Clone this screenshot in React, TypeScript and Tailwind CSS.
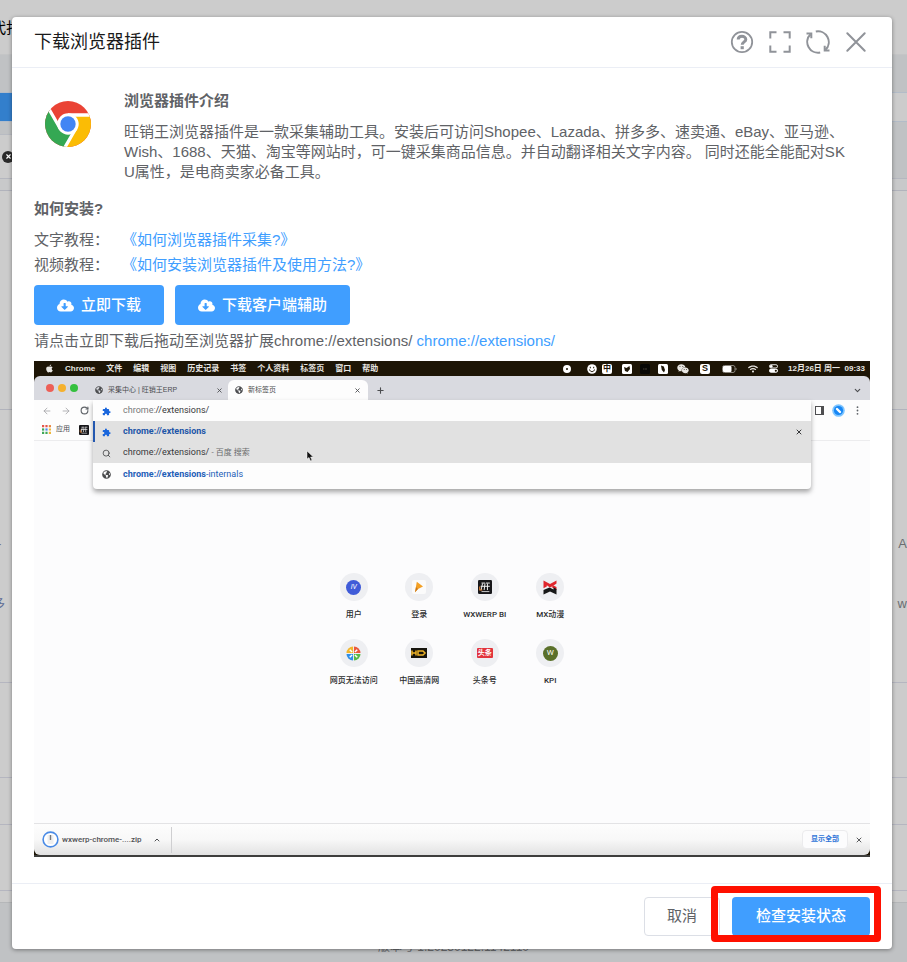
import type { ReactNode } from 'react';
import { FaApple, FaCloudDownloadAlt, FaGlobeAmericas, FaWeixin, FaWifi } from 'react-icons/fa';
import { MdExtension } from 'react-icons/md';
import { ArrowLeft, ArrowRight, ChevronDown, ChevronUp, Plus, RotateCw, Search, X } from 'lucide-react';

const MENU_ITEMS = ['文件', '编辑', '视图', '历史记录', '书签', '个人资料', '标签页', '窗口', '帮助'];

/** 背景页面（被遮罩压暗） */
function PageBackdrop() {
  return (
    <div aria-hidden="true" className="absolute inset-0 flex flex-col overflow-hidden bg-[#cccccc] text-[13px] text-[#6b6d70]">
      <div className="h-[55px] shrink-0 overflow-hidden border-b border-[#c4c5c6] pt-[18px] text-[15px] leading-5 text-black">
        <span className="-ml-[9px]">代打</span>
      </div>
      <div className="h-[37px] shrink-0 bg-[#c0c2c4]" />
      <div className="flex h-[30px] shrink-0 justify-between border-y border-[#b3bcc8] bg-[#cccccc]">
        <div className="w-10 bg-[#337fcc]" />
      </div>
      <div className="flex h-14 shrink-0 justify-between bg-[#c0c2c4]">
        <div className="mt-3 flex w-10 items-center border-t border-[#b8bbc2] bg-[#cccccc] pl-0.5">
          <span className="flex size-3 items-center justify-center rounded-full bg-[#2a2a2a] text-white">
            <X size={7} strokeWidth={4} />
          </span>
        </div>
      </div>
      <div className="h-3 shrink-0 border-t border-[#b5b7bf] bg-[#c8c9ca]" />
      <div className="h-[219px] shrink-0 border-t border-[#b1b3bc]" />
      <div className="h-[273px] shrink-0 border-t border-[#b1b3bc] pt-[124px]">
        <div className="flex justify-between leading-5">
          <span className="-ml-[3px]">-</span>
          <span>A</span>
        </div>
        <div className="mt-10 flex justify-between leading-5">
          <span className="-ml-2 text-[#5d6b94]">多</span>
          <span>w</span>
        </div>
      </div>
      <div className="h-[95px] shrink-0 border-t border-[#b5b6c0]" />
      <div className="h-[47px] shrink-0 border-t border-[#b5b6c0]" />
      <div className="h-[66px] shrink-0 border-t border-[#b5b6c0]" />
      <div className="h-3 shrink-0 border-t border-[#b5b6c0]" />
      <div className="grow border-t border-[#b5b7b9] bg-[#c0c2c4] pt-9 text-center text-[12px] leading-4">
        版本号 1.20230122.1142110
      </div>
    </div>
  );
}

function ChromeLogo() {
  return (
    <svg viewBox="-23 -23 46 46" className="size-[46px]" aria-label="Chrome" role="img">
      <clipPath id="chrome-disc">
        <circle r="23" />
      </clipPath>
      <g clipPath="url(#chrome-disc)">
        <rect x="-23" y="-23" width="46" height="46" fill="#ea4335" />
        <path d="M0-9H30V30.5H-7.2L7.8 4.5Z" fill="#fbbc05" />
        <path d="M7.8 4.5L-7.2 30.5H-30V-21.5H-22.8L-7.8 4.5Z" fill="#34a853" />
        <path d="M0-9H30M7.8 4.5L-7.2 30.5M-7.8 4.5L-22.8-21.5" stroke="#fff" strokeWidth="3.3" />
      </g>
      <circle r="10.7" fill="#fff" />
      <circle r="7.7" fill="#4285f4" />
    </svg>
  );
}

function HeaderButton({ label, children }: { label: string; children: ReactNode }) {
  return (
    <button type="button" aria-label={label} className="text-[#909399]">
      <svg viewBox="-12 -12 24 24" className="size-6" fill="none" stroke="currentColor" strokeWidth="2">
        {children}
      </svg>
    </button>
  );
}

function DialogHeader() {
  return (
    <header className="flex h-[51px] items-center justify-between border-b border-[#ebeef5] pr-6 pl-[22px]">
      <h1 className="text-[18px] leading-6 text-[#1a1a1a]">下载浏览器插件</h1>
      <div className="flex gap-[14px]">
        <HeaderButton label="帮助">
          <circle r="10.2" strokeWidth="1.8" />
          <path d="M-3.8-2.4C-3.8-6.8 3.8-6.6 3.8-2.6C3.8 0 .2-.2.2 2.8" strokeWidth="3" />
          <path d="M.2 4.2V7.2" strokeWidth="3.2" />
        </HeaderButton>
        <HeaderButton label="全屏">
          <path d="M-3.5-9.7H-9.7V-3.5M3.5-9.7H9.7V-3.5M-3.5 9.7H-9.7V3.5M3.5 9.7H9.7V3.5" />
        </HeaderButton>
        <HeaderButton label="刷新">
          <path d="M-2.2-10.5A10.8 10.8 0 0 1 7.5 7.8M2.2 10.5A10.8 10.8 0 0 1-7.5-7.8" />
          <path d="M6.7 3.8V8.5H11.5M-6.7-3.8V-8.5H-11.5" />
        </HeaderButton>
        <HeaderButton label="关闭">
          <path d="M-8.7-8.7L8.7 8.7M8.7-8.7L-8.7 8.7" strokeLinecap="round" />
        </HeaderButton>
      </div>
    </header>
  );
}

function Intro() {
  return (
    <section className="flex items-start pt-[23px]">
      <div className="w-[90px] shrink-0 pt-[10px] pl-[11px]">
        <ChromeLogo />
      </div>
      <div className="min-w-0">
        <h2 className="font-bold leading-5">浏览器插件介绍</h2>
        <p className="mt-[11px] leading-5">
          旺销王浏览器插件是一款采集辅助工具。安装后可访问Shopee、Lazada、拼多多、速卖通、eBay、亚马逊、
          <br />
          Wish、1688、天猫、淘宝等网站时，可一键采集商品信息。并自动翻译相关文字内容。 同时还能全能配对SK
          <br />
          U属性，是电商卖家必备工具。
        </p>
      </div>
    </section>
  );
}

function Install() {
  return (
    <section className="mt-[17px]">
      <h2 className="font-bold leading-5">如何安装?</h2>
      <div className="mt-2 leading-[25px]">
        <div className="flex">
          <span className="w-[88px]">文字教程：</span>
          <a href="#text" className="text-[#409eff]">《如何浏览器插件采集?》</a>
        </div>
        <div className="flex">
          <span className="w-[88px]">视频教程：</span>
          <a href="#video" className="text-[#409eff]">《如何安装浏览器插件及使用方法?》</a>
        </div>
      </div>
      <div className="mt-2 flex gap-[11px] font-medium text-white">
        <button type="button" className="flex h-10 items-center gap-[7px] rounded bg-[#409eff] px-[23px]">
          <FaCloudDownloadAlt size={17} />
          立即下载
        </button>
        <button type="button" className="flex h-10 items-center gap-[7px] rounded bg-[#409eff] px-[23px]">
          <FaCloudDownloadAlt size={17} />
          下载客户端辅助
        </button>
      </div>
      <p className="mt-[6px] leading-5">
        请点击立即下载后拖动至浏览器扩展chrome://extensions/{' '}
        <a href="#extensions" className="text-[#409eff]">chrome://extensions/</a>
      </p>
    </section>
  );
}

function MenuBar() {
  return (
    <div className="flex h-[15px] items-center justify-between bg-[#1d1506] pr-[5px] pl-[11px] text-[8px] leading-3 font-bold text-[#e8e6e2]">
      <div className="flex items-center gap-[11px]">
        <FaApple size={9} />
        <span>Chrome</span>
        {MENU_ITEMS.map((item) => (
          <span key={item} className="whitespace-nowrap">{item}</span>
        ))}
      </div>
      <div className="flex items-center">
        <span className="mr-4 size-2 rounded-full border-[3px] border-white" />
        <svg viewBox="0 0 10 10" className="mr-[5px] size-[10px]">
          <circle cx="5" cy="5" r="4.8" fill="#fff" />
          <path d="M3.3 2.8V4.3M6.7 2.8V4.3M2.5 5.5C3 8.3 7 8.3 7.5 5.5" fill="none" stroke="#1d1506" />
        </svg>
        <span className="mr-[10px] flex size-[10px] items-center justify-center rounded-[2px] bg-white text-[8px] leading-none text-[#1d1506]">中</span>
        <svg viewBox="0 0 10 10" className="mr-2 size-[10px]">
          <rect width="10" height="10" rx="1.5" fill="#fff" />
          <path d="M2 3L4.5 4L7.5 2L8 5L5.5 8L3 7Z" fill="#1d1506" />
        </svg>
        <svg viewBox="0 0 10 10" className="mr-2 size-[10px]">
          <rect width="10" height="10" rx="1.5" fill="#080704" />
          <path d="M3 5H4.5M6 4V6" stroke="#443f35" />
        </svg>
        <svg viewBox="0 0 10 10" className="mr-[9px] size-[10px]">
          <rect width="10" height="10" rx="1.5" fill="#fff" />
          <path d="M3 1.5L5.8 2.5L7 6L6 8.6L3.8 6Z" fill="#1d1506" />
        </svg>
        <FaWeixin size={12} className="mr-[11px]" />
        <span className="mr-3 flex size-[10px] items-center justify-center rounded-[2px] bg-white text-[9px] leading-none text-[#1d1506]">S</span>
        <svg viewBox="0 0 15 8" className="mr-[11px] h-2 w-[15px]">
          <rect x=".5" y=".5" width="12.5" height="7" rx="2" fill="none" stroke="#8b877e" />
          <rect x="1" y="1" width="8.5" height="6" rx="1" fill="#fff" />
          <path d="M14 3V5" stroke="#8b877e" />
        </svg>
        <FaWifi size={10} className="mr-[11px]" />
        <svg viewBox="0 0 10 10" className="mr-[10px] size-[9px]">
          <rect x=".5" y=".8" width="9" height="3.6" rx="1.8" fill="none" stroke="#fff" />
          <circle cx="2.5" cy="2.6" r="1.5" fill="#fff" />
          <rect x="0" y="5.4" width="10" height="4.2" rx="2" fill="#fff" />
          <circle cx="7.6" cy="7.5" r="1.2" fill="#1d1506" />
        </svg>
        <span className="whitespace-pre">12月26日 周一  09:33</span>
      </div>
    </div>
  );
}

function TabStrip() {
  return (
    <div className="bg-[#1d1506]">
      <div className="flex h-6 items-end rounded-t-md bg-[#d9dae0] pr-2 pl-3 text-[7px] text-[#4c4d50]">
        <div className="flex h-6 w-[49px] items-center gap-1">
          <span className="size-2 rounded-full bg-[#ed5f57]" />
          <span className="size-2 rounded-full bg-[#f5b12e]" />
          <span className="size-2 rounded-full bg-[#35c03f]" />
        </div>
        <div className="flex h-6 w-[133px] items-center gap-[5px] pt-1 pr-[5px]">
          <FaGlobeAmericas size={8} />
          <span className="grow">采集中心 | 旺销王ERP</span>
          <X size={7} strokeWidth={3} />
        </div>
        <div className="flex h-5 w-[140px] items-center gap-[5px] rounded-t-md bg-[#fdfdfd] px-[7px]">
          <FaGlobeAmericas size={8} />
          <span className="grow">新标签页</span>
          <X size={7} strokeWidth={3} />
        </div>
        <div className="flex h-6 grow items-center justify-between pt-1 pl-2">
          <Plus size={9} strokeWidth={3} />
          <ChevronDown size={9} strokeWidth={3} />
        </div>
      </div>
    </div>
  );
}

function AddressArea() {
  return (
    <div className="relative h-[41px] border-b border-[#ececee] bg-[#fdfdfd] px-2">
      <div className="flex h-[21px] items-center justify-between text-[#5f6368]">
        <div className="flex items-center gap-[9px]">
          <ArrowLeft size={10} className="text-[#a5a5a8]" />
          <ArrowRight size={10} className="text-[#a5a5a8]" />
          <RotateCw size={9} strokeWidth={3} />
        </div>
        <div className="flex items-center gap-2">
          <svg viewBox="0 0 9 9" className="size-[9px]">
            <rect x=".5" y=".5" width="8" height="8" fill="none" stroke="#4e4e50" />
            <rect x="6" y="1" width="2.5" height="7" fill="#4e4e50" />
          </svg>
          <svg viewBox="0 0 13 13" className="size-[13px]">
            <circle cx="6.5" cy="6.5" r="6.3" fill="#7cc4ff" />
            <circle cx="6.5" cy="6.5" r="4.6" fill="#1787f5" />
            <path d="M5 5L8 8" stroke="#fff" strokeWidth="2.4" strokeLinecap="round" />
          </svg>
          <svg viewBox="0 0 9 9" className="size-[9px]" fill="#5f6368">
            <circle cx="4.5" cy="1.2" r=".9" />
            <circle cx="4.5" cy="4.5" r=".9" />
            <circle cx="4.5" cy="7.8" r=".9" />
          </svg>
        </div>
      </div>
      <div className="flex h-[17px] items-center text-[7px] text-[#4c4d50]">
        <svg viewBox="0 0 9 9" className="mr-[5px] size-[9px]">
          <path d="M0 1.2H2.2M3.4 1.2H5.6" stroke="#e5554a" strokeWidth="2.2" />
          <path d="M6.8 1.2H9" stroke="#e8853d" strokeWidth="2.2" />
          <path d="M0 4.5H2.2" stroke="#3fa757" strokeWidth="2.2" />
          <path d="M3.4 4.5H5.6" stroke="#4c86ee" strokeWidth="2.2" />
          <path d="M6.8 4.5H9M6.8 7.8H9" stroke="#efb73b" strokeWidth="2.2" />
          <path d="M0 7.8H2.2M3.4 7.8H5.6" stroke="#3fa757" strokeWidth="2.2" />
        </svg>
        <span className="mr-[9px]">应用</span>
        <ErpGlyph className="size-[10px]" />
      </div>
      <Suggestions />
    </div>
  );
}

function Suggestions() {
  return (
    <div className="absolute top-0 right-[59px] left-[59px] z-10 rounded-b bg-[#fdfdfd] pb-1 font-['Roboto','Noto_Sans_CJK_SC',sans-serif] text-[9px] text-[#37383a] shadow-[0_3px_5px_rgba(0,0,0,0.35)]">
      <div className="flex h-[21px] items-center gap-3 pt-px pl-[9px]">
        <MdExtension size={9} className="text-[#1a66dc]" />
        <span>
          <span className="text-[#77787a]">chrome:</span>//extensions/
        </span>
      </div>
      <div className="bg-[#e1e1e1]">
        <div className="flex h-[21px] items-center gap-3 border-l-2 border-[#2458b0] pt-px pr-2 pl-[7px]">
          <MdExtension size={9} className="text-[#1a66dc]" />
          <span className="grow font-bold text-[#2256a8]">chrome://extensions</span>
          <X size={8} strokeWidth={3} />
        </div>
        <div className="flex h-[21px] items-center gap-3 pt-px pl-[9px]">
          <Search size={9} strokeWidth={2} />
          <span>
            chrome://extensions/ <span className="text-[8px] text-[#6b6c6e]">- 百度 搜索</span>
          </span>
        </div>
      </div>
      <div className="flex h-[22px] items-center gap-3 pt-px pl-[9px] text-[#2460b8]">
        <FaGlobeAmericas size={9} className="text-[#4a4b4d]" />
        <span>
          <b>chrome://extensions</b>-internals
        </span>
      </div>
      {/* 鼠标指针 */}
      <svg viewBox="0 0 8 12" className="absolute top-[50px] left-[213px] h-3 w-2">
        <path d="M1 1V9L3 7.5L4.5 11L6 10.3L4.6 7H7.3Z" fill="#111" stroke="#fff" strokeWidth=".5" />
      </svg>
    </div>
  );
}

function ErpGlyph({ className }: { className: string }) {
  return (
    <svg viewBox="0 0 16 16" className={className}>
      <rect width="16" height="16" rx="1.5" fill="#17171a" />
      <path d="M4 3.5H8M9 3.5H13.5M5.2 4L3.5 11.5M3 7.2H13.5M10.8 4V11.5M8 4L7 11.5" stroke="#f3f3f3" strokeWidth="1.1" fill="none" />
      <path d="M2 7.5V11.5H5" stroke="#ee8a34" strokeWidth="1.2" fill="none" />
      <path d="M4 13.2H13" stroke="#bbb" strokeWidth="1.2" />
    </svg>
  );
}

const SHORTCUTS: { label: string; icon: ReactNode }[] = [
  {
    label: '用户',
    icon: <span className="flex size-[15px] items-center justify-center rounded-full bg-[#3f5bd8] text-[7px] italic text-white">IV</span>,
  },
  {
    label: '登录',
    icon: (
      <svg viewBox="0 0 14 14" className="size-[14px]">
        <rect width="14" height="14" rx="2" fill="#fbfbfb" />
        <path d="M4.8 1.8L11 6.5L6 9L3 12.2Z" fill="#f4a024" />
        <path d="M6 9L3 12.2L4 7Z" fill="#c9781d" />
      </svg>
    ),
  },
  { label: 'WXWERP BI', icon: <ErpGlyph className="size-[14px]" /> },
  {
    label: 'MX动漫',
    icon: (
      <svg viewBox="0 0 14 15" className="h-[15px] w-[14px]">
        <path d="M.5.5L7 4L13.5.5V3.5L8.5 7L13.5 10V7L10.5 5.5L7 7.5L3.8 5.2V6.6L.5 8.2Z" fill="#e0262c" />
        <path d="M.5 14.5V10L6.5 7.6L10.5 9.6V7.2L13.5 9V14.5L7 11.5Z" fill="#171717" />
      </svg>
    ),
  },
  {
    label: '网页无法访问',
    icon: (
      <svg viewBox="0 0 16 16" className="size-[15px]">
        <path d="M7.5.5V7.5H.5A7.2 7.2 0 0 1 7.5.5Z" fill="#f2b52c" />
        <path d="M8.5.5A7.2 7.2 0 0 1 15.5 7.5H8.5Z" fill="#e9573b" />
        <path d="M.5 8.5H7.5V15.5A7.2 7.2 0 0 1 .5 8.5Z" fill="#2f8fe8" />
        <path d="M8.5 8.5H15.5A7.2 7.2 0 0 1 8.5 15.5Z" fill="#58b947" />
        <path d="M4 4L6.5 6.5M12 4L9.5 6.5M4 12L6.5 9.5M12 12L9.5 9.5" stroke="#fff" strokeWidth="1.6" />
      </svg>
    ),
  },
  {
    label: '中国高清网',
    icon: (
      <svg viewBox="0 0 16 10" className="h-[10px] w-4">
        <rect width="16" height="10" fill="#15130c" />
        <path d="M1 2.5V7.5M5 2.5V7.5M1 5H5M7 3H12L14 5L12 7H7Z" fill="none" stroke="#edb326" strokeWidth="1.5" />
      </svg>
    ),
  },
  {
    label: '头条号',
    icon: <span className="flex h-[10px] w-4 items-center justify-center rounded-[1px] bg-[#e2343c] text-[7px] leading-none font-bold text-white">头条</span>,
  },
  {
    label: 'KPI',
    icon: <span className="flex size-[15px] items-center justify-center rounded-full bg-[#5a702a] text-[8px] text-white">W</span>,
  },
];

function NewTabPage() {
  return (
    <div className="flex justify-center bg-[#fcfcfd] pt-[132px] pb-[125px]">
      <div className="grid w-[262px] grid-cols-4 gap-y-[7px] font-['Roboto','Noto_Sans_CJK_SC',sans-serif]">
        {SHORTCUTS.map(({ label, icon }) => (
          <a key={label} href="#shortcut" className="flex h-[59px] flex-col items-center text-[8px] text-[#2b2c2e]">
            <span className="flex size-7 items-center justify-center rounded-full bg-[#eeeff2]">{icon}</span>
            <span className="mt-2 leading-3 font-medium whitespace-nowrap">{label}</span>
          </a>
        ))}
      </div>
    </div>
  );
}

function DownloadShelf() {
  return (
    <div className="border-b-2 border-[#3e3e3c] bg-[#1d1506]">
      <div className="flex h-8 items-center justify-between rounded-b-md border-t border-[#e3e3e5] bg-linear-to-b from-[#fdfdfd] via-[#f8f8f8] to-[#e2e2e2] pr-[7px] pl-2">
        <div className="flex h-[26px] items-center border-r border-[#cfcfd1] pr-[10px] text-[8px] text-[#505154]">
          <svg viewBox="0 0 17 17" className="mr-[3px] size-[17px]">
            <circle cx="8.5" cy="8.5" r="7.4" fill="#fff" stroke="#4a8be6" strokeWidth="1.6" />
            <rect x="5.5" y="4" width="6" height="9" fill="#efefef" />
            <path d="M8.5 4V9" stroke="#77787a" strokeWidth="1.4" />
          </svg>
          <span className="font-['Roboto',sans-serif] font-medium">wxwerp-chrome-....zip</span>
          <ChevronUp size={8} strokeWidth={3} className="ml-[11px]" />
        </div>
        <div className="flex items-center gap-[7px]">
          <button type="button" className="h-[19px] rounded-sm border border-[#ebebed] bg-[#fcfcfd] px-2 text-[7px] font-bold text-[#2e74d8]">
            显示全部
          </button>
          <X size={8} strokeWidth={3} className="text-[#5b5c5e]" />
        </div>
      </div>
    </div>
  );
}

/** 安装演示画面 */
function DemoVideo() {
  return (
    <div className="mt-[10px]">
      <MenuBar />
      <TabStrip />
      <AddressArea />
      <NewTabPage />
      <DownloadShelf />
    </div>
  );
}

function DialogFooter() {
  return (
    <footer className="mt-[26px] flex justify-end gap-3 border-t border-[#ebeef5] px-[22px] py-[13px]">
      <button type="button" className="h-[39px] rounded border border-[#dcdfe6] bg-white px-[22px]">
        取消
      </button>
      <div className="relative">
        <button type="button" className="h-[39px] rounded bg-[#409eff] px-6 font-medium text-white">
          检查安装状态
        </button>
        {/* 红色标注框 */}
        <span className="pointer-events-none absolute -top-[11px] -right-[11px] -bottom-[6px] -left-[21px] rounded border-[7px] border-[#ff1000]" />
      </div>
    </footer>
  );
}

export default function App() {
  return (
    <div className="relative min-h-screen overflow-hidden font-['Liberation_Sans','Noto_Sans_CJK_SC',sans-serif]">
      <PageBackdrop />
      <main
        role="dialog"
        aria-label="下载浏览器插件"
        className="relative mt-[17px] mr-[15px] mb-[13px] ml-3 rounded-sm bg-white text-[15px] text-[#606266] shadow-[0_1px_4px_rgba(0,0,0,0.4)]"
      >
        <DialogHeader />
        <div className="px-[22px]">
          <Intro />
          <Install />
          <DemoVideo />
        </div>
        <DialogFooter />
      </main>
    </div>
  );
}
